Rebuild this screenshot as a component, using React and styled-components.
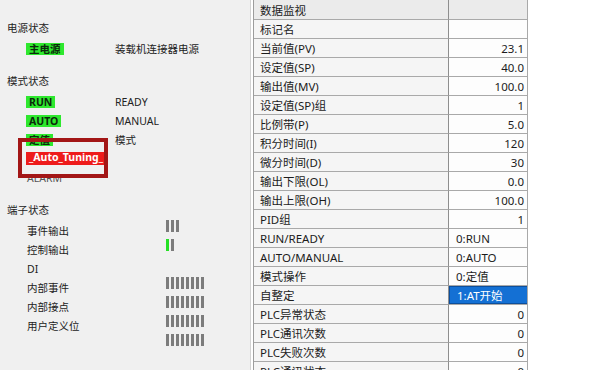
import React from "react";
import styled, { createGlobalStyle } from "styled-components";

const GlobalStyle = createGlobalStyle`
    html, body {
        margin: 0;
        padding: 0;
        overflow: hidden;
        background: #ffffff;
    }

    body {
        font-family: "Noto Sans", "Noto Sans CJK SC", sans-serif;
        color: #1a1a1a;
    }
`

const modeRows = [
    { badge: "RUN", desc: "READY", color: "green" },
    { badge: "AUTO", desc: "MANUAL", color: "green" },
    { badge: "定值", desc: "模式", color: "green" },
    { badge: "_Auto_Tuning_", desc: "", color: "red" },
    { badge: "ALARM", desc: "", color: "none" }
];

const terminals = ["事件输出", "控制输出", "DI", "内部事件", "内部接点", "用户定义位"];

// one entry per bar row; value = list of bar states
const barRows = [
    [0, 0, 0],
    [1, 0],
    [],
    [0, 0, 0, 0, 0, 0, 0, 0],
    [0, 0, 0, 0, 0, 0, 0, 0],
    [0, 0, 0, 0, 0, 0, 0, 0],
    [0, 0, 0, 0, 0, 0, 0, 0]
];

const monitor = [
    { name: "标记名", value: "" },
    { name: "当前值(PV)", value: "23.1" },
    { name: "设定值(SP)", value: "40.0" },
    { name: "输出值(MV)", value: "100.0" },
    { name: "设定值(SP)组", value: "1" },
    { name: "比例带(P)", value: "5.0" },
    { name: "积分时间(I)", value: "120" },
    { name: "微分时间(D)", value: "30" },
    { name: "输出下限(OL)", value: "0.0" },
    { name: "输出上限(OH)", value: "100.0" },
    { name: "PID组", value: "1" },
    { name: "RUN/READY", value: "0:RUN", left: true },
    { name: "AUTO/MANUAL", value: "0:AUTO", left: true },
    { name: "模式操作", value: "0:定值", left: true },
    { name: "自整定", value: "1:AT开始", left: true, selected: true },
    { name: "PLC异常状态", value: "0" },
    { name: "PLC通讯次数", value: "0" },
    { name: "PLC失败次数", value: "0" },
    { name: "PLC通讯状态", value: "0" }
];

export default function App() {
    return (
        <>
            <GlobalStyle />
            <Screen>
                <StatusPanel>
                    <Section>
                        <Heading>电源状态</Heading>
                        <StatusRow>
                            <Badge $color="green">主电源</Badge>
                            <span>装载机连接器电源</span>
                        </StatusRow>
                    </Section>

                    <Section $top={13}>
                        <Heading>模式状态</Heading>
                        {modeRows.map((r, i) => (
                            <StatusRow key={i}>
                                <Badge $color={r.color}>{r.badge}</Badge>
                                <span>{r.desc}</span>
                            </StatusRow>
                        ))}
                    </Section>

                    <Section $top={13}>
                        <Heading>端子状态</Heading>
                        <TerminalBody>
                            <TerminalLabels>
                                {terminals.map((t) => <TerminalLabel key={t}>{t}</TerminalLabel>)}
                            </TerminalLabels>
                            <BarColumn>
                                {barRows.map((row, i) => (
                                    <BarRow key={i}>
                                        {row.map((on, j) => <Bar key={j} $on={on === 1} />)}
                                    </BarRow>
                                ))}
                            </BarColumn>
                        </TerminalBody>
                    </Section>

                    <Highlight />
                </StatusPanel>

                <GridArea>
                    <Grid>
                        <Cell $head>数据监视</Cell>
                        <Cell $head $value></Cell>
                        {monitor.map((m) => (
                            <React.Fragment key={m.name}>
                                <Cell>{m.name}</Cell>
                                <Cell $value $left={m.left}>
                                    {m.selected ? <Selected>{m.value}</Selected> : m.value}
                                </Cell>
                            </React.Fragment>
                        ))}
                    </Grid>
                </GridArea>
            </Screen>
        </>
    );
}

const Screen = styled.div`
    display: flex;
    width: 600px;
    height: 370px;
    overflow: hidden;
`

const StatusPanel = styled.div`
    position: relative;
    box-sizing: border-box;
    width: 251px;
    height: 370px;
    padding-top: 18px;
    background: #f0f0f0;
    border-right: 1px solid #d2d2d2;
    font-size: 10.5px;
    color: #222;
`

const Section = styled.div`
    display: flex;
    flex-direction: column;
    margin-top: ${props => props.$top || 0}px;
`

const Heading = styled.div`
    height: 20px;
    line-height: 20px;
    padding-left: 7px;
    margin-bottom: 1px;
`

const StatusRow = styled.div`
    display: grid;
    grid-template-columns: 89px auto;
    align-items: center;
    height: 19px;
    padding-left: 26px;
`

const badgeColors = {
    green: { bg: "#2ee82e", fg: "#0c2a0c" },
    red: { bg: "#ee1b1b", fg: "#ffffff" },
    none: { bg: "transparent", fg: "#555" }
};

const Badge = styled.span`
    justify-self: start;
    height: ${props => props.$color === "red" ? 13 : 12}px;
    line-height: ${props => props.$color === "red" ? 11 : 12}px;
    padding: 0 ${props => props.$color === "none" ? 1 : 3}px;
    background: ${props => badgeColors[props.$color].bg};
    color: ${props => badgeColors[props.$color].fg};
    font-weight: ${props => props.$color === "none" ? 400 : 700};
    white-space: nowrap;
`

const Highlight = styled.div`
    position: absolute;
    left: 18px;
    top: 138px;
    width: 90px;
    height: 40px;
    box-sizing: border-box;
    border: 4px solid #a31616;
`

const TerminalBody = styled.div`
    display: flex;
    padding-left: 27px;
`

const TerminalLabels = styled.div`
    width: 139px;
    padding-top: 1px;
`

const TerminalLabel = styled.div`
    height: 19px;
    line-height: 19px;
`

const BarColumn = styled.div`
    display: flex;
    flex-direction: column;
    margin-top: -1px;
`

const BarRow = styled.div`
    display: flex;
    gap: 2px;
    height: 19px;
`

const Bar = styled.div`
    width: 3px;
    height: 12px;
    background: ${props => props.$on ? "#25e025" : "#7c7c7c"};
`

const GridArea = styled.div`
    flex: 1;
    padding-left: 2px;
    background: #ffffff;
`

const Grid = styled.div`
    display: grid;
    grid-template-columns: 195px 79px;
    grid-auto-rows: 19px;
    grid-template-rows: 20px;
    width: 274px;
    border-left: 1px solid #9c9c9c;
    font-size: 11.5px;
    color: #1c1c1c;
`

const Cell = styled.div`
    box-sizing: border-box;
    display: flex;
    align-items: center;
    justify-content: ${props => props.$value && !props.$left ? "flex-end" : "flex-start"};
    padding: ${props => props.$value ? (props.$left ? "0 0 0 7px" : "0 3px 0 0") : "0 0 0 6px"};
    border-bottom: 1px solid #a9a9a9;
    border-right: 1px solid ${props => props.$value ? "#a9a9a9" : "#8e8e8e"};
    background: ${props => props.$head ? "#ebebeb" : props.$value ? "#fdfdfd" : "#f5f5f5"};
    white-space: nowrap;
    overflow: hidden;
`

const Selected = styled.div`
    box-sizing: border-box;
    align-self: stretch;
    display: flex;
    align-items: center;
    margin: 0 -1px 0 -7px;
    padding-left: 7px;
    flex: 1;
    background: #1470d4;
    border: 1px solid #0d4f9c;
    color: #ffffff;
`
